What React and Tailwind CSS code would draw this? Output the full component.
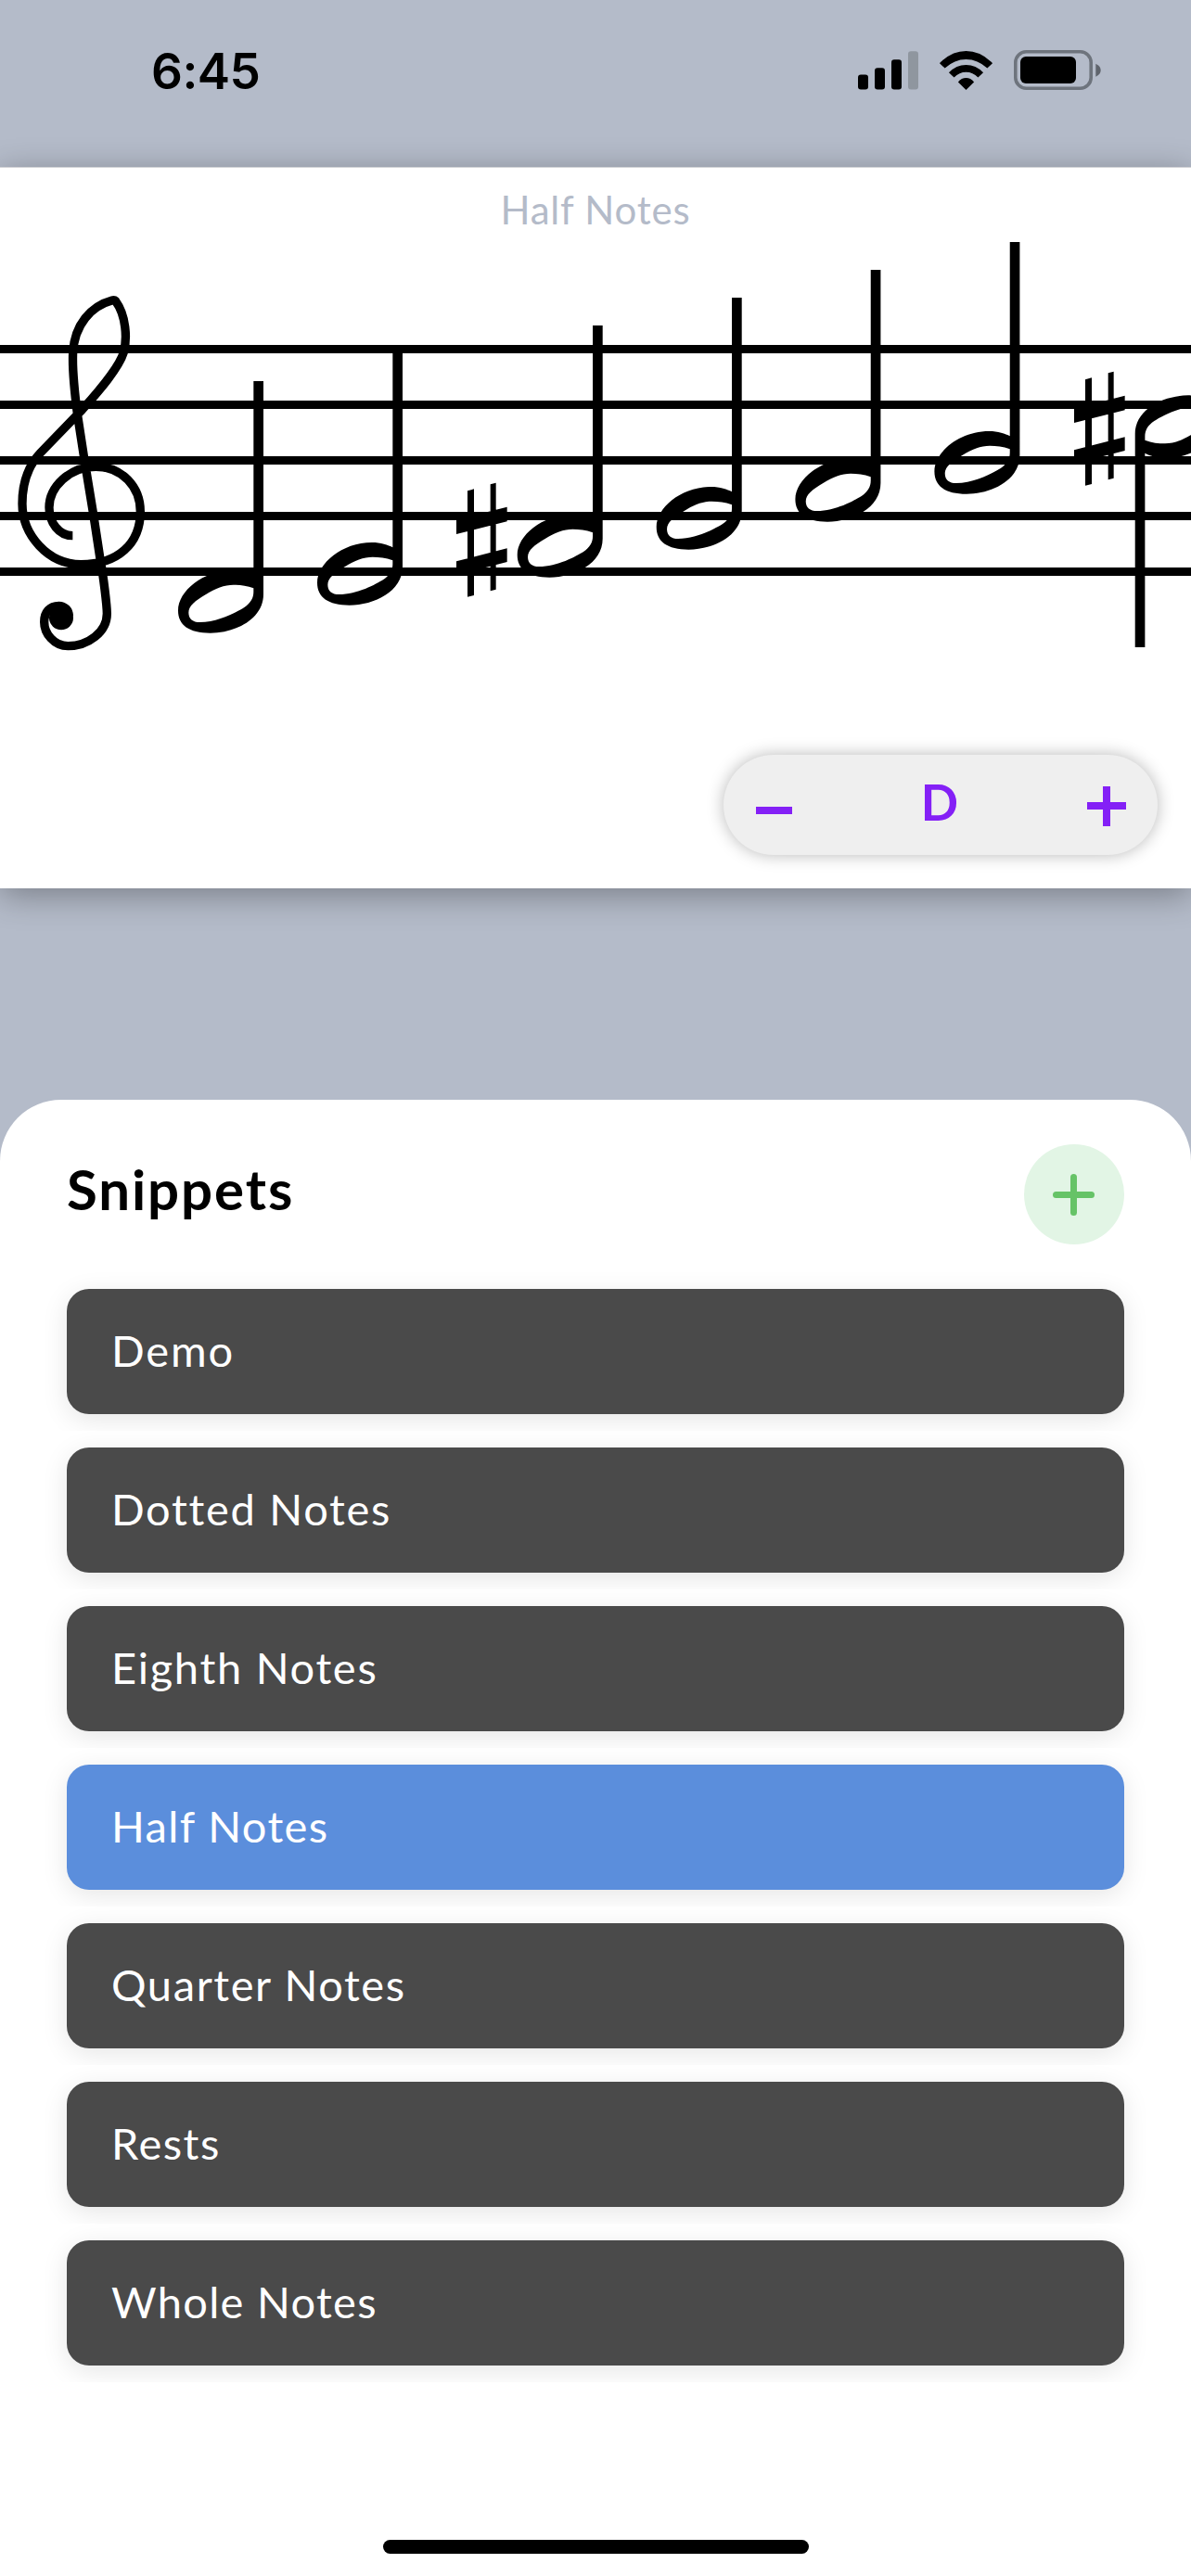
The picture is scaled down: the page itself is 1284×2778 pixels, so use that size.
import React from "react";

const SNIPPETS = [
  { name: "Demo", tracking: "tracking-[1.9px]" },
  { name: "Dotted Notes", tracking: "tracking-[1.7px]" },
  { name: "Eighth Notes", tracking: "tracking-[1.7px]" },
  { name: "Half Notes", tracking: "tracking-[1.4px]", active: true },
  { name: "Quarter Notes", tracking: "tracking-[1.6px]" },
  { name: "Rests", tracking: "tracking-[1.5px]" },
  { name: "Whole Notes", tracking: "tracking-[1.3px]" },
];

const STAFF_LINES = [372, 432, 492, 552, 612];

const NOTES = [
  { x: 192, y: 411 },
  { x: 342, y: 381 },
  { x: 557.7, y: 351 },
  { x: 707.7, y: 321 },
  { x: 857.4, y: 291 },
  { x: 1007.4, y: 261 },
];

const SHARPS = [
  { x: 492, y: 520.7 },
  { x: 1158, y: 400.7 },
];

const NOTE_PATH =
  "M244 0H276V690C276 770 185 815 104 815C35 815 0 790 0 742C0 680 80 612 177 612C205 612 230 620 244 628Z" +
  "M244 670C222 661 200 659 179 659C150 659 120 671 90 690C55 711 34 727 34 749C34 769 48 780 70 780C130 780 190 747 214 732C235 718 244 702 244 682Z";

const SHARP_PATH =
  "M36 26L57 20V364L36 369ZM110 5L128 0V345L110 350ZM0 120L164 78V125L0 166ZM0 254L164 212V256L0 298Z";

function SignalIcon() {
  return (
    <svg className="h-[42px] w-[65px]" viewBox="925 54.5 65 42">
      <rect x="925" y="80" width="11" height="16" rx="3" />
      <rect x="943" y="72.7" width="11" height="23.3" rx="3" />
      <rect x="961" y="63.8" width="11" height="32.2" rx="3" />
      <rect x="979" y="54.8" width="11" height="41.2" rx="3" fill="#8f969f" />
    </svg>
  );
}

function WifiIcon() {
  return (
    <svg className="h-[42px] w-[57px]" viewBox="0 0 172 127" preserveAspectRatio="none">
      <path d="M0 40Q3 36 6 34Q42 0 86 0T166 34Q169 36 172 40L155 56Q124 27 86 27T17 56Z" />
      <path d="M30 70Q54 45 86 45T142 70L125 86Q108 69 86 69T47 86Z" />
      <path d="M60 101Q71 88 86 88T112 101L86 127Z" />
    </svg>
  );
}

function BatteryIcon() {
  return (
    <svg className="h-[43px] w-[94px]" viewBox="1093 54 94 43">
      <rect x="1094.8" y="55.8" width="81.4" height="39.4" rx="11.5" fill="none" stroke="#6e747d" strokeWidth="3.6" />
      <rect x="1100" y="61" width="60" height="29" rx="6" />
      <path d="M1181.3 68.7Q1186.7 71.3 1186.7 75.7T1181.3 82.7Z" fill="#5f646c" />
    </svg>
  );
}

function Staff() {
  return (
    <svg className="block h-[470px] w-full shrink-0" viewBox="0 250 1284 470">
      {STAFF_LINES.map((y) => (
        <rect key={y} x="0" y={y} width="1284" height="9" />
      ))}
      <g transform="translate(0 300) scale(0.33333)">
        <path
          fill="none"
          stroke="#000"
          strokeWidth="28"
          strokeLinejoin="round"
          d="M235 833C190 833 159 790 159 742C159 675 225 610 310 610C395 610 454 675 454 755C454 860 380 926 262 926C155 926 72 830 72 730C72 650 100 598 130 566L266 425C320 365 385 290 400 240C412 195 408 120 374 74C371 71 366 71 362 72C295 90 241 150 236 240C233 300 240 360 250 438L271 575L303 770L325 915C334 960 346 1060 346 1085C346 1145 285 1190 220 1190C175 1190 143 1150 143 1112C143 1080 162 1060 190 1060C210 1060 223 1075 223 1093"
        />
        <circle cx="198" cy="1099" r="39" />
      </g>
      {NOTES.map((n) => (
        <path key={n.x} fillRule="evenodd" d={NOTE_PATH} transform={`translate(${n.x} ${n.y}) scale(0.33333)`} />
      ))}
      <path fillRule="evenodd" d={NOTE_PATH} transform="translate(1315.7 698) scale(-0.33333)" />
      {SHARPS.map((s) => (
        <path key={s.x} d={SHARP_PATH} transform={`translate(${s.x} ${s.y}) scale(0.33333)`} />
      ))}
    </svg>
  );
}

function KeyStepper() {
  return (
    <div className="mr-9 flex h-[108px] w-[468px] items-center self-end rounded-full bg-[#efefef] shadow-[0_0_18px_rgba(0,0,0,0.28)]">
      <button className="mt-[11px] ml-[35px] h-2 w-[39px] bg-[#8420f6]" aria-label="Previous key" />
      <div className="flex-1 pb-[7px] text-center text-[53px] leading-none font-bold text-[#8420f6]">D</div>
      <button className="mt-[2px] mr-[34px]" aria-label="Next key">
        <svg className="block h-[43px] w-[42px]" viewBox="0 0 42 43" fill="#8420f6">
          <rect x="0" y="17" width="42" height="8" />
          <rect x="17" y="0" width="8" height="43" />
        </svg>
      </button>
    </div>
  );
}

export default function App() {
  return (
    <div className="flex h-[2778px] w-[1284px] flex-col overflow-hidden bg-[#b4bbc9] font-['Lato',sans-serif] text-black">
      <header className="flex h-[180px] shrink-0 items-start justify-between pr-[97px] pl-[163px]">
        <div className="pt-[45px] font-['Inter'] text-[53px] leading-[64px] font-semibold tracking-[-0.5px]">6:45</div>
        <div className="flex items-center gap-[23px] pt-[54px]">
          <SignalIcon />
          <WifiIcon />
          <BatteryIcon />
        </div>
      </header>

      <section className="flex h-[778px] shrink-0 flex-col border-t border-[#d3d4d7] bg-white shadow-[0_7px_34px_rgba(0,0,0,0.33)]">
        <h2 className="h-[69px] shrink-0 pt-[20px] text-center text-[42px] leading-[50px] tracking-[0.8px] text-[#b4bbc9]">
          Half Notes
        </h2>
        <Staff />
        <div className="h-[94px] shrink-0" />
        <KeyStepper />
      </section>

      <main className="mt-[228px] flex flex-1 flex-col rounded-t-[66px] bg-white">
        <div className="flex h-[186px] shrink-0 items-start justify-between px-[72px] pt-12">
          <h1 className="pt-[12px] text-[60px] leading-[72px] font-bold tracking-[1.9px]">Snippets</h1>
          <button className="flex size-[108px] items-center justify-center rounded-full bg-[#e2f5e5] pr-[2px]" aria-label="Add snippet">
            <svg className="size-[45px]" viewBox="0 0 45 45" fill="#66c367">
              <rect x="0" y="19" width="45" height="7" rx="3.5" />
              <rect x="19" y="0" width="7" height="45" rx="3.5" />
            </svg>
          </button>
        </div>
        <ul className="flex flex-col">
          {SNIPPETS.map((s) => (
            <li key={s.name} className="h-[171px] overflow-hidden px-[72px] py-[18px]">
              <div
                className={`flex h-[135px] items-center rounded-3xl pb-[3px] pl-12 text-[47px] leading-none text-white shadow-[0_6px_28px_rgba(0,0,0,0.1)] ${
                  s.tracking
                } ${s.active ? "bg-[#5b8edc]" : "bg-[#4a4a4a]"}`}
              >
                {s.name}
              </div>
            </li>
          ))}
        </ul>
        <div className="mt-auto mb-6 h-[15px] w-[459px] self-center rounded-full bg-black" />
      </main>
    </div>
  );
}
